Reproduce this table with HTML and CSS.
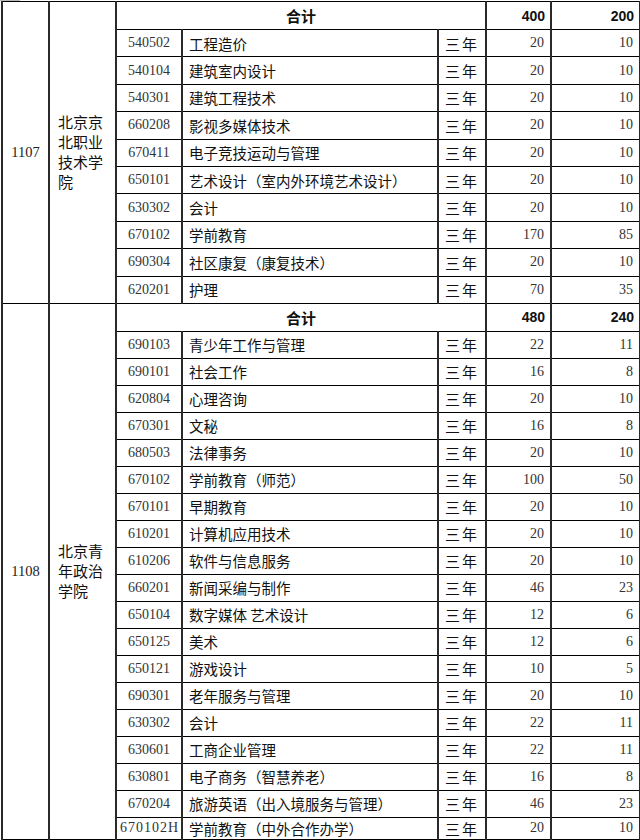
FILE: index.html
```html
<!DOCTYPE html>
<html lang="zh">
<head>
<meta charset="utf-8">
<title>招生计划</title>
<link rel="stylesheet" href="styles.css">
</head>
<body>
<div class="topmark"></div>
<table class="plan">
  <colgroup>
    <col class="c-id"><col class="c-school"><col class="c-code"><col class="c-major"><col class="c-len"><col class="c-n1"><col class="c-n2">
  </colgroup>
  <tbody>
    <tr class="sum">
      <td class="id" rowspan="11">1107</td>
      <td class="school" rowspan="11">北京京北职业技术学院</td>
      <td class="sum-label" colspan="3">合计</td>
      <td class="sum-num">400</td>
      <td class="sum-num">200</td>
    </tr>
    <tr class="r1"><td class="code">540502</td><td class="major">工程造价</td><td class="len">三年</td><td class="num">20</td><td class="num">10</td></tr>
    <tr class="r1"><td class="code">540104</td><td class="major">建筑室内设计</td><td class="len">三年</td><td class="num">20</td><td class="num">10</td></tr>
    <tr class="r1"><td class="code">540301</td><td class="major">建筑工程技术</td><td class="len">三年</td><td class="num">20</td><td class="num">10</td></tr>
    <tr class="r1"><td class="code">660208</td><td class="major">影视多媒体技术</td><td class="len">三年</td><td class="num">20</td><td class="num">10</td></tr>
    <tr class="r1"><td class="code">670411</td><td class="major">电子竞技运动与管理</td><td class="len">三年</td><td class="num">20</td><td class="num">10</td></tr>
    <tr class="r1"><td class="code">650101</td><td class="major">艺术设计（室内外环境艺术设计）</td><td class="len">三年</td><td class="num">20</td><td class="num">10</td></tr>
    <tr class="r1"><td class="code">630302</td><td class="major">会计</td><td class="len">三年</td><td class="num">20</td><td class="num">10</td></tr>
    <tr class="r1"><td class="code">670102</td><td class="major">学前教育</td><td class="len">三年</td><td class="num">170</td><td class="num">85</td></tr>
    <tr class="r1"><td class="code">690304</td><td class="major">社区康复（康复技术）</td><td class="len">三年</td><td class="num">20</td><td class="num">10</td></tr>
    <tr class="r1"><td class="code">620201</td><td class="major">护理</td><td class="len">三年</td><td class="num">70</td><td class="num">35</td></tr>

    <tr class="sum">
      <td class="id" rowspan="20">1108</td>
      <td class="school" rowspan="20">北京青年政治学院</td>
      <td class="sum-label" colspan="3">合计</td>
      <td class="sum-num">480</td>
      <td class="sum-num">240</td>
    </tr>
    <tr class="r2"><td class="code">690103</td><td class="major">青少年工作与管理</td><td class="len">三年</td><td class="num">22</td><td class="num">11</td></tr>
    <tr class="r2"><td class="code">690101</td><td class="major">社会工作</td><td class="len">三年</td><td class="num">16</td><td class="num">8</td></tr>
    <tr class="r2"><td class="code">620804</td><td class="major">心理咨询</td><td class="len">三年</td><td class="num">20</td><td class="num">10</td></tr>
    <tr class="r2"><td class="code">670301</td><td class="major">文秘</td><td class="len">三年</td><td class="num">16</td><td class="num">8</td></tr>
    <tr class="r2"><td class="code">680503</td><td class="major">法律事务</td><td class="len">三年</td><td class="num">20</td><td class="num">10</td></tr>
    <tr class="r2"><td class="code">670102</td><td class="major">学前教育（师范）</td><td class="len">三年</td><td class="num">100</td><td class="num">50</td></tr>
    <tr class="r2"><td class="code">670101</td><td class="major">早期教育</td><td class="len">三年</td><td class="num">20</td><td class="num">10</td></tr>
    <tr class="r2"><td class="code">610201</td><td class="major">计算机应用技术</td><td class="len">三年</td><td class="num">20</td><td class="num">10</td></tr>
    <tr class="r2"><td class="code">610206</td><td class="major">软件与信息服务</td><td class="len">三年</td><td class="num">20</td><td class="num">10</td></tr>
    <tr class="r2"><td class="code">660201</td><td class="major">新闻采编与制作</td><td class="len">三年</td><td class="num">46</td><td class="num">23</td></tr>
    <tr class="r2"><td class="code">650104</td><td class="major">数字媒体 艺术设计</td><td class="len">三年</td><td class="num">12</td><td class="num">6</td></tr>
    <tr class="r2"><td class="code">650125</td><td class="major">美术</td><td class="len">三年</td><td class="num">12</td><td class="num">6</td></tr>
    <tr class="r2"><td class="code">650121</td><td class="major">游戏设计</td><td class="len">三年</td><td class="num">10</td><td class="num">5</td></tr>
    <tr class="r2"><td class="code">690301</td><td class="major">老年服务与管理</td><td class="len">三年</td><td class="num">20</td><td class="num">10</td></tr>
    <tr class="r2"><td class="code">630302</td><td class="major">会计</td><td class="len">三年</td><td class="num">22</td><td class="num">11</td></tr>
    <tr class="r2"><td class="code">630601</td><td class="major">工商企业管理</td><td class="len">三年</td><td class="num">22</td><td class="num">11</td></tr>
    <tr class="r2"><td class="code">630801</td><td class="major">电子商务（智慧养老）</td><td class="len">三年</td><td class="num">16</td><td class="num">8</td></tr>
    <tr class="r2"><td class="code">670204</td><td class="major">旅游英语（出入境服务与管理）</td><td class="len">三年</td><td class="num">46</td><td class="num">23</td></tr>
    <tr class="r-last"><td class="code code-wide">670102H</td><td class="major">学前教育（中外合作办学）</td><td class="len">三年</td><td class="num">20</td><td class="num">10</td></tr>
  </tbody>
</table>
</body>
</html>
```

FILE: styles.css
```css
html, body {
  margin: 0;
  padding: 0;
  background: #ffffff;
}

body {
  position: relative;
  font-family: "Noto Sans CJK SC", "Noto Sans", sans-serif;
  color: #111;
}

.topmark {
  position: absolute;
  left: 0;
  top: 0;
  width: 20px;
  height: 1px;
  background: #b8b8b8;
}

.plan {
  margin: 1px 0 0 1px;
  width: 638px;
  table-layout: fixed;
  border-collapse: collapse;
}

.c-id { width: 47px; }
.c-school { width: 67px; }
.c-code { width: 66px; }
.c-major { width: 256px; }
.c-len { width: 48px; }
.c-n1 { width: 65px; }
.c-n2 { width: 89px; }

.plan td {
  padding: 0;
  border-top: 1px solid #000;
  border-bottom: 1px solid #000;
  border-left: 2px solid #2a2a2a;
  border-right: 2px solid #2a2a2a;
  vertical-align: middle;
  white-space: nowrap;
  overflow: hidden;
}

.sum { height: 28px; }
.r1 { height: 27.4px; }
.r2 { height: 27px; }
.r-last { height: 22px; }

.id {
  text-align: center;
  font-family: "Liberation Serif", serif;
  font-size: 14.5px;
  color: #222;
}

.plan td.school {
  white-space: normal;
  padding: 0 9px 0 8px;
  font-size: 15px;
  line-height: 20px;
  text-align: left;
  word-break: break-all;
}

.sum-label {
  text-align: center;
  font-weight: bold;
  font-size: 15px;
}

.plan td.sum-num {
  text-align: right;
  padding-right: 5px;
  font-family: "Liberation Sans", Arial, sans-serif;
  font-weight: bold;
  font-size: 14px;
  color: #111;
}

.code {
  text-align: center;
  font-family: "Liberation Serif", serif;
  font-size: 14px;
  color: #333;
}

.code-wide {
  letter-spacing: 1px;
  text-indent: 1px;
}

.plan td.major {
  padding-left: 6px;
  font-size: 14.5px;
  text-align: left;
}

.plan td.len {
  text-align: center;
  font-size: 15px;
  letter-spacing: 2px;
  text-indent: 0;
}

.plan td.num {
  text-align: right;
  padding-right: 6px;
  font-family: "Liberation Serif", serif;
  font-size: 14px;
  color: #333;
}
```
